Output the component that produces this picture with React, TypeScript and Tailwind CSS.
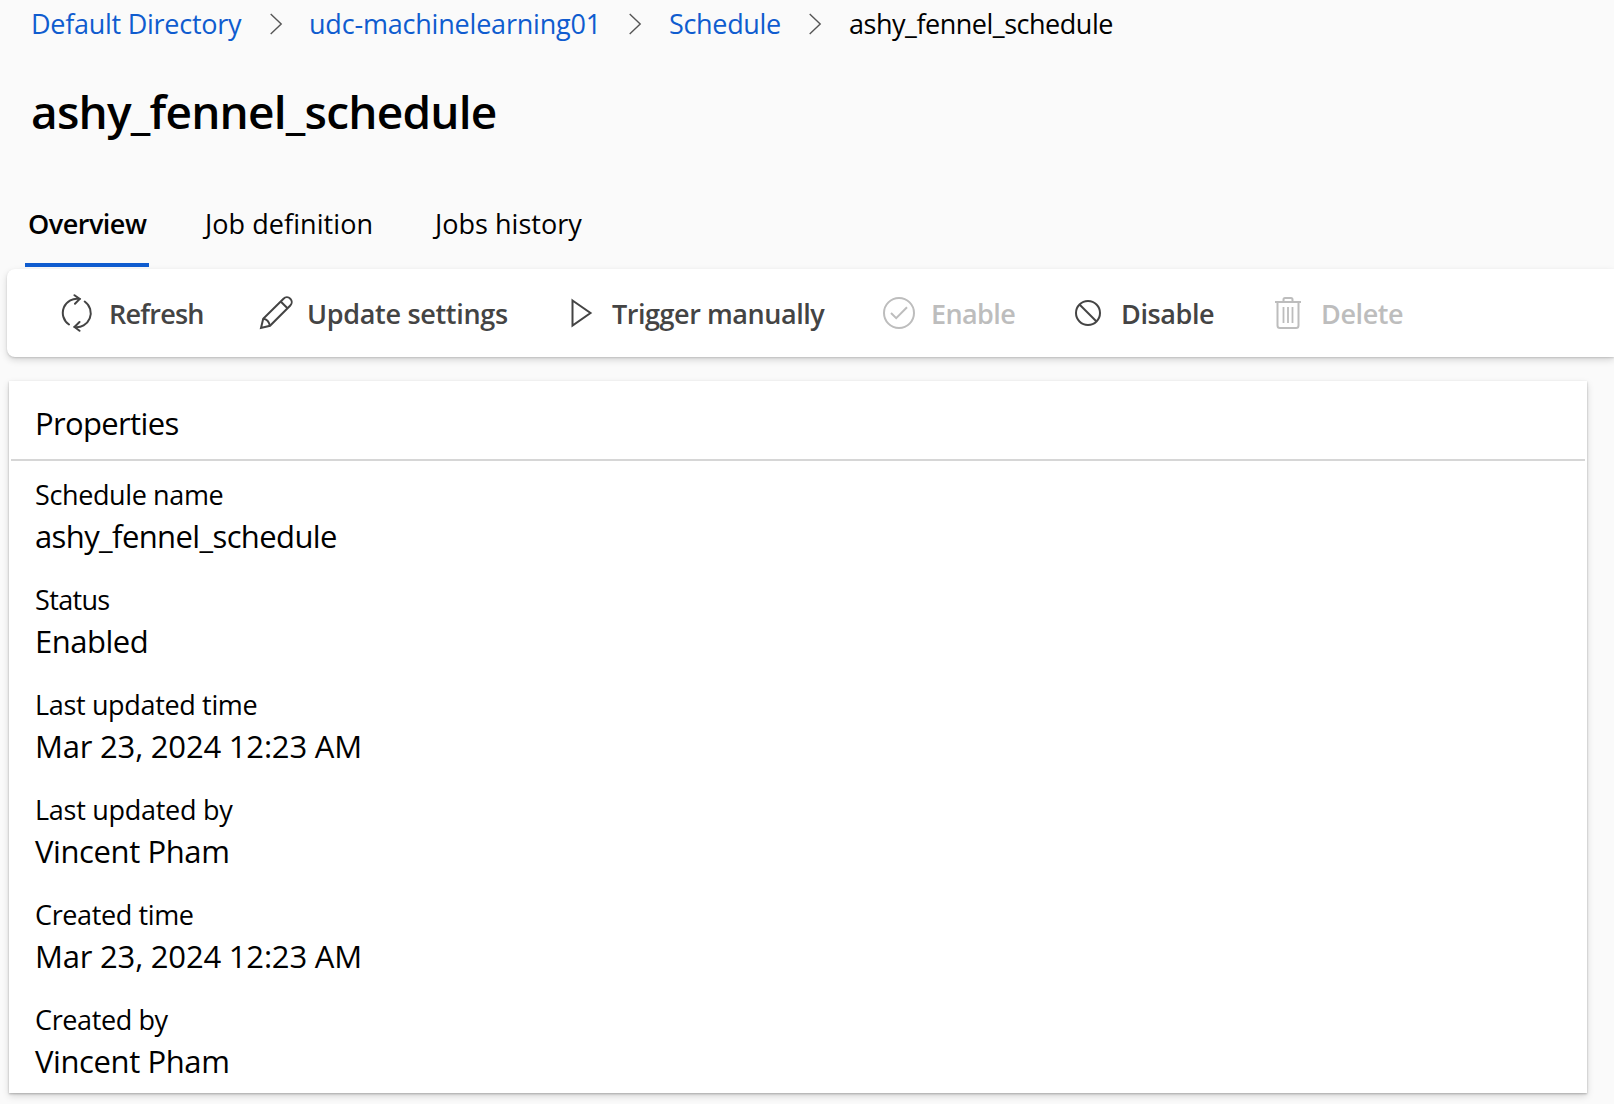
import type { ReactNode } from 'react';

function Chevron({ className }: { className: string }) {
  return (
    <svg className={`shrink-0 ${className}`} width="13" height="22" viewBox="0 0 13 22" fill="none" stroke="#555" strokeWidth="1.4">
      <path d="M0.700 1 L11.200 11 L0.700 21" />
    </svg>
  );
}

function RefreshIcon() {
  return (
    <svg className="shrink-0" width="32" height="38" viewBox="0 0 32 38" fill="none" stroke="currentColor" strokeWidth="2" strokeLinecap="round">
      <path d="M8 30.5 A14.1 14.1 0 0 1 18.700 5" />
      <path d="M13.500 1.200 L18.700 5 L14 9.800" />
      <path d="M23.700 7.500 A14.1 14.1 0 0 1 13.500 33" />
      <path d="M18.500 28 L13.500 33 L18.500 36.800" />
    </svg>
  );
}

function PencilIcon() {
  return (
    <svg className="shrink-0" width="34" height="34" viewBox="0 0 34 34" fill="none" stroke="currentColor" strokeWidth="2">
      <path d="M2 32 L4.2 22.8 L24.5 2.7 A4.6 4.6 0 0 1 31.3 9.5 L11 29.8 Z" />
      <path d="M21.7 5.5 L28.5 12.3 M4.2 22.8 Q9.5 23.5 11 29.8" />
    </svg>
  );
}

function PlayIcon() {
  return (
    <svg className="shrink-0" width="22" height="30" viewBox="0 0 22 30" fill="none" stroke="currentColor" strokeWidth="2">
      <path d="M1.500 2.5 L19.500 15 L1.500 27.5 Z" />
    </svg>
  );
}

function CheckIcon() {
  return (
    <svg className="shrink-0" width="32" height="32" viewBox="0 0 32 32" fill="none" stroke="currentColor" strokeWidth="2">
      <circle cx="16" cy="16" r="15" />
      <path d="M8 16 L13.2 21.2 L24 10.3" />
    </svg>
  );
}

function BlockedIcon() {
  return (
    <svg className="shrink-0" width="26" height="26" viewBox="0 0 26 26" fill="none" stroke="currentColor" strokeWidth="2">
      <circle cx="13" cy="13" r="12" />
      <path d="M4.5 4.5 L21.5 21.5" />
    </svg>
  );
}

function TrashIcon() {
  return (
    <svg className="shrink-0" width="26" height="32" viewBox="0 0 26 32" fill="none" stroke="currentColor" strokeWidth="2">
      <path d="M0 5 H26 M8.5 5 V2.5 Q8.5 1 10 1 H16 Q17.5 1 17.5 2.5 V5 M2.5 5 V28.5 Q2.5 31 5 31 H21 Q23.5 31 23.5 28.5 V5" />
      <path d="M8.5 10 V26 M13 10 V26 M17.5 10 V26" strokeWidth="1.8" />
    </svg>
  );
}

function Command({ icon, label, slot, iconSlot, spacing, disabled }: {
  icon: ReactNode; label: string; slot: string; iconSlot: string; spacing: string; disabled?: boolean;
}) {
  return (
    <button disabled={disabled} className={`flex h-full shrink-0 items-center whitespace-nowrap font-semibold ${slot} ${disabled ? 'text-[#bdbdbd]' : 'text-[#444]'}`}>
      <span className={`flex shrink-0 items-center ${iconSlot}`}>{icon}</span>
      <span className={`pt-[3px] ${spacing}`}>{label}</span>
    </button>
  );
}

const properties = [
  { label: 'Schedule name', labelSpacing: 'tracking-[-0.38px]', value: 'ashy_fennel_schedule', valueSpacing: 'tracking-[-0.61px]' },
  { label: 'Status', labelSpacing: 'tracking-[-0.65px]', value: 'Enabled', valueSpacing: 'tracking-[-0.5px]' },
  { label: 'Last updated time', labelSpacing: 'tracking-[-0.34px]', value: 'Mar 23, 2024 12:23 AM', valueSpacing: 'tracking-[-0.19px]' },
  { label: 'Last updated by', labelSpacing: 'tracking-[-0.27px]', value: 'Vincent Pham', valueSpacing: 'tracking-[-0.4px]' },
  { label: 'Created time', labelSpacing: 'tracking-[-0.38px]', value: 'Mar 23, 2024 12:23 AM', valueSpacing: 'tracking-[-0.19px]' },
  { label: 'Created by', labelSpacing: 'tracking-[-0.38px]', value: 'Vincent Pham', valueSpacing: 'tracking-[-0.4px]' },
];

export default function App() {
  return (
    <div className="h-[1104px] w-full overflow-hidden bg-[#fafafa] font-['Open_Sans','Noto_Sans',sans-serif] text-[27px] text-black">
      <nav className="flex h-[47px] items-center whitespace-nowrap pl-[31px] text-[#0f5ccf]">
        <a className="w-[239px] shrink-0 pt-[2px] tracking-[-0.27px]">Default Directory</a>
        <Chevron className="mr-[26px]" />
        <a className="w-[320px] shrink-0 pt-[2px] tracking-[-0.2px]">udc-machinelearning01</a>
        <Chevron className="mr-[27px]" />
        <a className="w-[140px] shrink-0 pt-[2px] tracking-[-0.33px]">Schedule</a>
        <Chevron className="mr-[27px]" />
        <span className="pt-[2px] tracking-[-0.48px] text-black">ashy_fennel_schedule</span>
      </nav>

      <h1 className="flex h-[128px] items-center pl-[31px] text-[46px] font-semibold tracking-[-0.78px]">ashy_fennel_schedule</h1>

      <div className="mt-[5px] flex h-[87px] whitespace-nowrap pl-[25px]">
        <div className="relative flex w-[124px] items-center pt-[2px] pl-[3px] font-semibold tracking-[-0.5px]">
          Overview
          <span className="absolute inset-x-0 bottom-0 h-1 bg-[#0f5ccf]" />
        </div>
        <div className="ml-[56px] flex w-[230px] items-center pt-[2px] tracking-[0.06px]">Job definition</div>
        <div className="flex items-center pt-[2px] tracking-[0.02px]">Jobs history</div>
      </div>

      <div className="mt-[2px] ml-[7px] flex h-[88px] items-center rounded-l-lg bg-white pl-[54px] shadow-[0_3px_7px_rgba(0,0,0,0.15),0_1px_2px_rgba(0,0,0,0.14)]">
        <Command icon={<RefreshIcon />} label="Refresh" slot="w-[198px]" iconSlot="w-[48px]" spacing="tracking-[-0.77px]" />
        <Command icon={<PencilIcon />} label="Update settings" slot="w-[312px]" iconSlot="w-[48px]" spacing="tracking-[-0.31px]" />
        <Command icon={<PlayIcon />} label="Trigger manually" slot="w-[312px]" iconSlot="w-[41px]" spacing="tracking-[-0.45px]" />
        <Command icon={<CheckIcon />} label="Enable" slot="w-[192px]" iconSlot="w-[48px]" spacing="tracking-[-0.6px]" disabled />
        <Command icon={<BlockedIcon />} label="Disable" slot="w-[200px]" iconSlot="w-[46px]" spacing="tracking-[-0.4px]" />
        <Command icon={<TrashIcon />} label="Delete" slot="w-[140px]" iconSlot="w-[46px]" spacing="tracking-[-0.4px]" disabled />
      </div>

      <section className="mt-6 ml-[9px] h-[712px] w-[1578px] bg-white shadow-[0_3px_7px_rgba(0,0,0,0.15),0_1px_2px_rgba(0,0,0,0.25)]">
        <h2 className="mx-[2px] flex h-20 items-center border-b-2 border-[#d6d6d6] pt-[6px] pl-[24px] text-[31px] tracking-[-0.65px]">Properties</h2>
        <dl className="flex flex-col gap-[22px] pt-[13px] pl-[26px]">
          {properties.map((p) => (
            <div key={p.label}>
              <dt className={`leading-[42px] ${p.labelSpacing}`}>{p.label}</dt>
              <dd className={`text-[31px] leading-[41px] ${p.valueSpacing}`}>{p.value}</dd>
            </div>
          ))}
        </dl>
      </section>
    </div>
  );
}
